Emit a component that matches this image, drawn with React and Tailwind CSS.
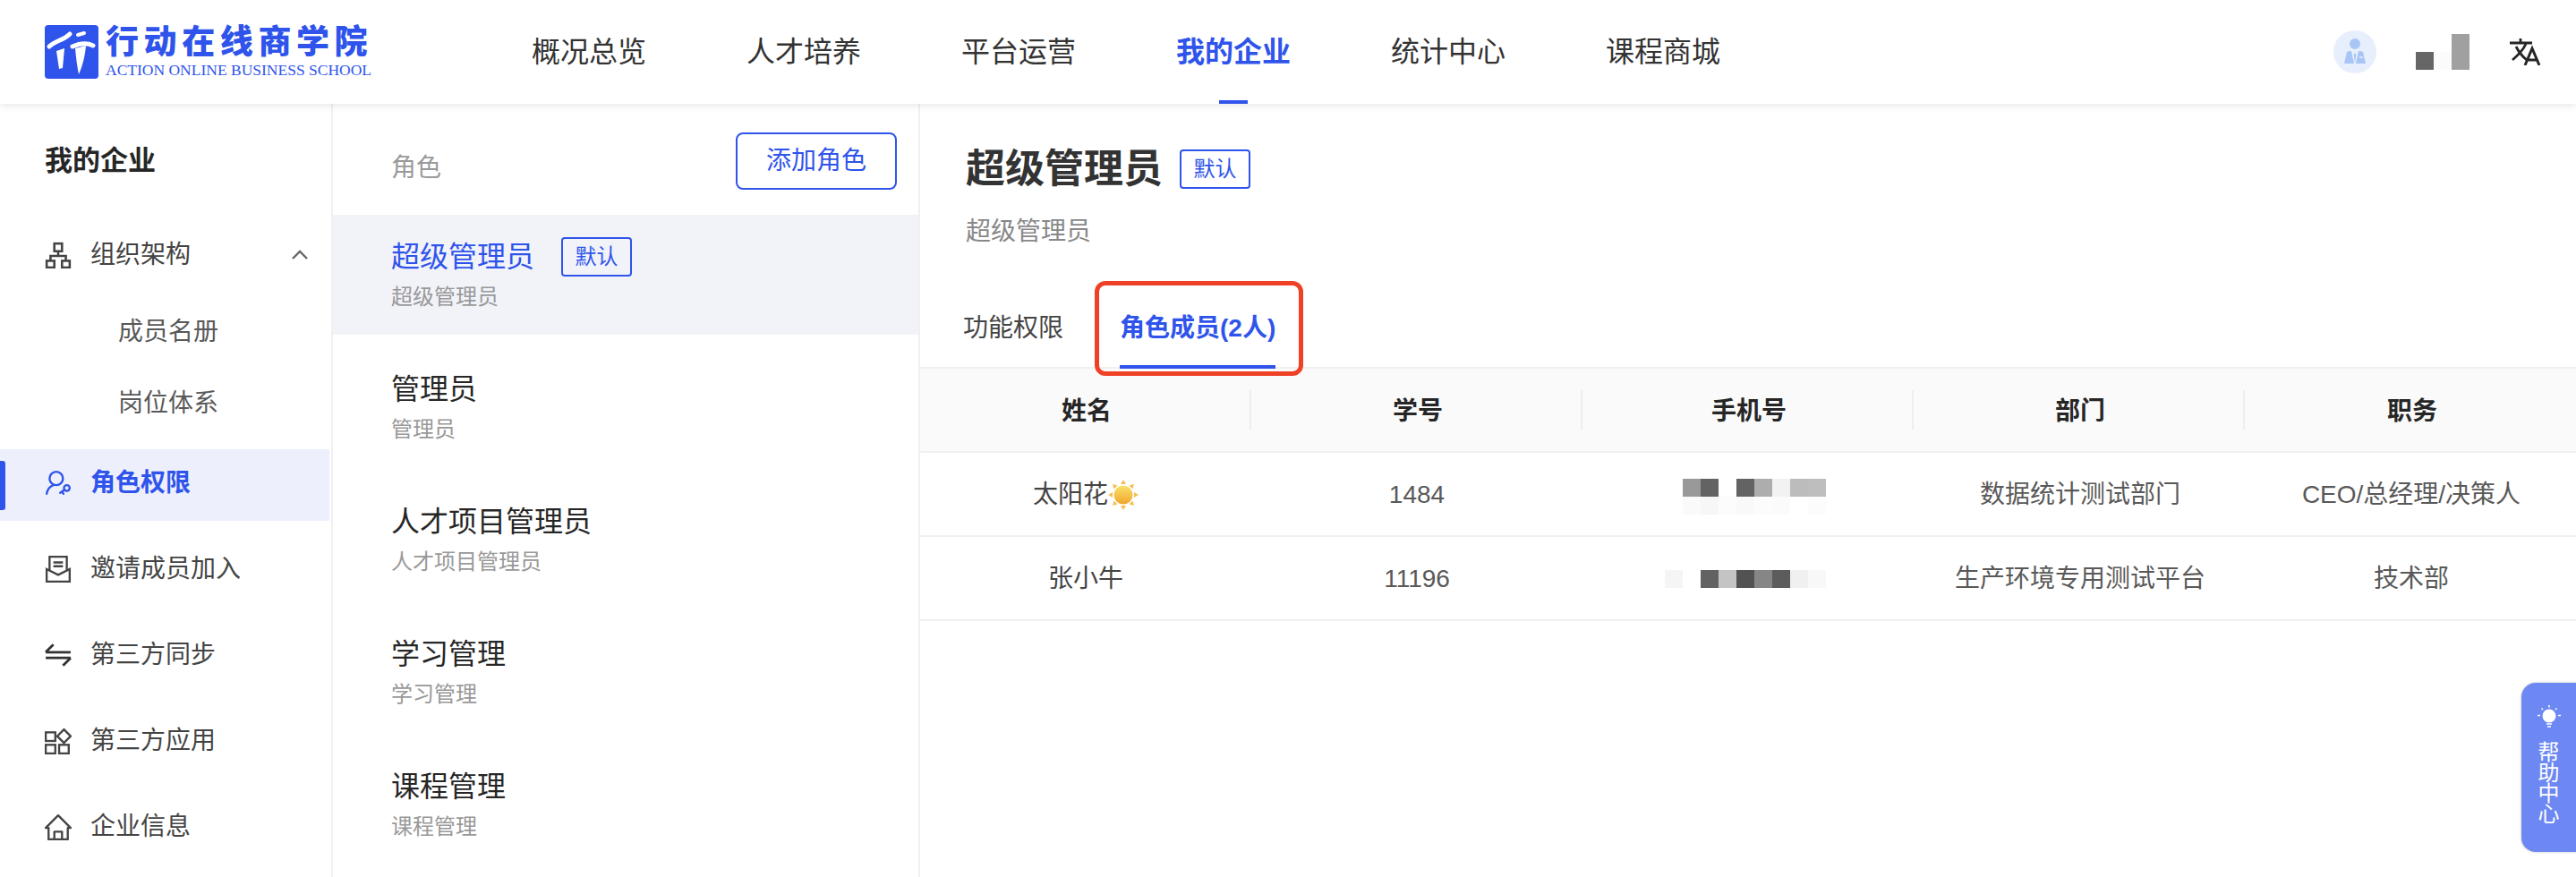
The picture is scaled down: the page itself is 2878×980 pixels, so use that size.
import React from "react";

const navItems = ["概况总览", "人才培养", "平台运营", "我的企业", "统计中心", "课程商城"];

const roles = [
  { name: "超级管理员", desc: "超级管理员", active: true },
  { name: "管理员", desc: "管理员" },
  { name: "人才项目管理员", desc: "人才项目管理员" },
  { name: "学习管理", desc: "学习管理" },
  { name: "课程管理", desc: "课程管理" },
];

const columns = ["姓名", "学号", "手机号", "部门", "职务"];

function LogoMark() {
  return (
    <svg width="60" height="60" viewBox="0 0 60 60" className="shrink-0">
      <rect width="60" height="60" rx="4" fill="#2f54eb" />
      <g fill="none" stroke="#fff" strokeLinecap="round">
        <path d="M5 24C12 17 20 18 28 10" strokeWidth="5" />
        <path d="M37 11L44 9" strokeWidth="4" />
        <path d="M31 24C38 21 46 19 54 23" strokeWidth="5" />
      </g>
      <path d="M13 29L22 26L20 48L16 49Z" fill="#fff" />
      <path d="M34 26L46 23C45 35 42 46 38 55C36 46 35 36 34 26Z" fill="#fff" />
    </svg>
  );
}

function OrgIcon() {
  return (
    <svg width="30" height="30" viewBox="0 0 28 28" fill="none" stroke="#444" strokeWidth="2.4">
      <rect x="10" y="2" width="8" height="8" />
      <rect x="2" y="20" width="8" height="7" />
      <rect x="18" y="20" width="8" height="7" />
      <path d="M14 10V15M6 20V15H22V20" />
    </svg>
  );
}

function RoleIcon() {
  return (
    <svg width="30" height="30" viewBox="0 0 28 28" fill="none" stroke="#2f54eb" strokeWidth="2.2" strokeLinecap="round">
      <circle cx="12" cy="9" r="7" />
      <path d="M2 25C3 20 6 17 9 16" />
      <circle cx="23" cy="19" r="3" />
      <path d="M20.5 21L16 24M18 22.5L19.5 25" />
    </svg>
  );
}

function InviteIcon() {
  return (
    <svg width="30" height="30" viewBox="0 0 28 28" fill="none" stroke="#444" strokeWidth="2.2">
      <path d="M5 15V1H23V15" />
      <path d="M9 7H19M9 11H19" />
      <path d="M2 14L14 20L26 14V27H2Z" />
    </svg>
  );
}

function SyncIcon() {
  return (
    <svg width="30" height="30" viewBox="0 0 28 28" fill="none" stroke="#333" strokeWidth="2.6">
      <path d="M1 11H27M1 11L9 3" />
      <path d="M27 17H1M27 17L19 25" />
    </svg>
  );
}

function AppsIcon() {
  return (
    <svg width="30" height="30" viewBox="0 0 28 28" fill="none" stroke="#444" strokeWidth="2.2">
      <rect x="1" y="5" width="10" height="9" />
      <rect x="1" y="18" width="10" height="9" />
      <rect x="15" y="18" width="10" height="9" />
      <path d="M20 2L27 9L20 16L13 9Z" />
    </svg>
  );
}

function HomeIcon() {
  return (
    <svg width="30" height="30" viewBox="0 0 28 28" fill="none" stroke="#444" strokeWidth="2.2" strokeLinejoin="round">
      <path d="M1 15L14 2L27 15H24V27H4V15Z" />
      <path d="M10 27V19H18V27" />
    </svg>
  );
}

function Avatar() {
  return (
    <svg width="48" height="48" viewBox="0 0 48 48">
      <circle cx="24" cy="24" r="24" fill="#e8effc" />
      <circle cx="24" cy="15" r="6" fill="#a9c5f6" />
      <path d="M12 37L15 24Q16 23 20 23L23 37Z" fill="#a9c5f6" />
      <path d="M36 37L33 24Q32 23 28 23L25 37Z" fill="#a9c5f6" />
      <path d="M24 25L22.8 27L23.4 33L24 36L24.6 33L25.2 27Z" fill="#a9c5f6" />
      <path d="M29 30H33" stroke="#fff" strokeWidth="1" />
    </svg>
  );
}

function TranslateIcon() {
  return (
    <svg width="34" height="30" viewBox="0 0 34 30" fill="none" stroke="#262626">
      <path d="M0 5H25M12 0V5" strokeWidth="2.8" />
      <path d="M18 6C15 13 10 18 3 24" strokeWidth="2.8" />
      <path d="M7 9C10 15 14 20 19 24" strokeWidth="2.8" />
      <path d="M17 30L25 11L33 30M20 24H30" strokeWidth="3" />
    </svg>
  );
}

function BulbIcon() {
  return (
    <svg width="26" height="28" viewBox="0 0 26 28" fill="none" stroke="#fff" strokeWidth="1.6">
      <circle cx="13" cy="13" r="7.5" fill="#fff" stroke="none" />
      <path d="M10 22H16M11 25H15" />
      <path d="M13 1V3.5M4.5 4.5L6 6M21.5 4.5L20 6M0 12.5H3M23 12.5H26" />
    </svg>
  );
}

function SunEmoji() {
  return (
    <svg width="34" height="34" viewBox="0 0 34 34">
      <defs>
        <linearGradient id="sunFill" x1="0" y1="0" x2="0" y2="1">
          <stop offset="0" stopColor="#fbe16a" />
          <stop offset="1" stopColor="#f0a52c" />
        </linearGradient>
      </defs>
      <path
        d="M17 0L20 5H14ZM17 34L14 29H20ZM0 17L5 14V20ZM34 17L29 20V14ZM5 5L10.5 6.5L6.5 10.5ZM29 5L27.5 10.5L23.5 6.5ZM5 29L6.5 23.5L10.5 27.5ZM29 29L23.5 27.5L27.5 23.5Z"
        fill="#f5bf55"
      />
      <circle cx="17" cy="17" r="10.5" fill="url(#sunFill)" />
    </svg>
  );
}

function Badge() {
  return (
    <span className="flex h-[44px] w-[79px] items-center justify-center rounded-[4px] border-2 border-[#2f54eb] text-[24px] text-[#2f54eb]">
      默认
    </span>
  );
}

function Pixels({ colors }) {
  return (
    <div className="flex">
      {colors.map((c, i) => (
        <div key={i} className={`h-[20px] w-[20px] ${c}`} />
      ))}
    </div>
  );
}

function SideItem({ icon, label, active }) {
  return (
    <div
      className={
        active
          ? "relative mr-[2px] mt-[11px] flex h-[80px] items-center gap-[21px] bg-[#edf0fc] pb-[4px] pl-[50px] text-[28px] font-semibold text-[#2f54eb]"
          : "mt-[16px] flex h-[80px] items-center gap-[21px] pb-[4px] pl-[50px] text-[28px] text-[#444]"
      }
    >
      {active && <span className="absolute left-0 top-[13px] h-[55px] w-[6px] rounded-r-[3px] bg-[#2f54eb]" />}
      {icon}
      <span>{label}</span>
    </div>
  );
}

export default function App() {
  return (
    <div className="relative flex h-[980px] w-[2878px] flex-col overflow-hidden bg-white text-[#333] [font-family:'Liberation_Sans','Noto_Sans_CJK_SC',sans-serif]">
      {/* Header */}
      <header className="relative z-10 flex h-[116px] shrink-0 items-center bg-white pl-[50px] shadow-[0_2px_8px_rgba(0,0,0,0.1)]">
        <div className="flex w-[366px] items-center gap-[8px]">
          <LogoMark />
          <div className="flex flex-col text-[#2f54eb]">
            <span className="text-[37px] font-black leading-[38px] tracking-[5.6px] whitespace-nowrap">行动在线商学院</span>
            <span className="mt-[2px] whitespace-nowrap text-[17.5px] leading-[18px] [font-family:'Liberation_Serif',serif]">
              ACTION ONLINE BUSINESS SCHOOL
            </span>
          </div>
        </div>
        <nav className="ml-[178px] flex h-full items-center gap-[112px]">
          {navItems.map((item) => (
            <div
              key={item}
              className={
                item === "我的企业"
                  ? "relative flex h-full items-center text-[32px] font-semibold text-[#2f54eb]"
                  : "flex h-full items-center text-[32px] text-[#333]"
              }
            >
              {item}
              {item === "我的企业" && <span className="absolute bottom-0 left-[48px] h-[4px] w-[32px] bg-[#2f54eb]" />}
            </div>
          ))}
        </nav>
        <div className="ml-auto flex items-center pr-[40px]">
          <Avatar />
          <div className="ml-[44px] flex h-[40px] items-end">
            <div className="h-[20px] w-[20px] bg-[#666]" />
            <div className="h-[20px] w-[20px] bg-[#fbfbfb]" />
            <div className="h-[40px] w-[20px] bg-[#a0a0a0]" />
          </div>
          <div className="ml-[45px] flex">
            <TranslateIcon />
          </div>
        </div>
      </header>

      <div className="flex min-h-0 flex-1">
        {/* Sidebar */}
        <aside className="w-[372px] shrink-0 border-r-2 border-[#f0f0f0]">
          <div className="pl-[50px] pt-[42px] text-[31px] font-bold leading-[44px] text-[#262626]">我的企业</div>
          <div className="mt-[43px] flex h-[80px] items-center gap-[21px] pl-[50px] pr-[26px] text-[28px] text-[#444]">
            <OrgIcon />
            <span>组织架构</span>
            <svg width="18" height="12" viewBox="0 0 18 12" fill="none" stroke="#666" strokeWidth="2.4" className="ml-auto">
              <path d="M1 10L9 2L17 10" />
            </svg>
          </div>
          <div className="ml-[132px] mt-[6px] flex h-[80px] items-center text-[28px] text-[#595959]">成员名册</div>
          <div className="ml-[132px] flex h-[80px] items-center text-[28px] text-[#595959]">岗位体系</div>
          <SideItem icon={<RoleIcon />} label="角色权限" active />
          <SideItem icon={<InviteIcon />} label="邀请成员加入" />
          <SideItem icon={<SyncIcon />} label="第三方同步" />
          <SideItem icon={<AppsIcon />} label="第三方应用" />
          <SideItem icon={<HomeIcon />} label="企业信息" />
        </aside>

        {/* Role list */}
        <section className="w-[656px] shrink-0 border-r-2 border-[#f0f0f0]">
          <div className="flex h-[124px] items-start justify-between pl-[65px] pr-[24px] pt-[32px]">
            <span className="mt-[20px] text-[28px] leading-[40px] text-[#999]">角色</span>
            <button className="h-[64px] w-[180px] rounded-[8px] border-2 border-[#2f54eb] text-[28px] text-[#2f54eb]">添加角色</button>
          </div>
          <div className="flex flex-col gap-[14px]">
            {roles.map((role) => (
              <div key={role.name} className={role.active ? "h-[134px] bg-[#f2f3f9] pl-[65px] pt-[23px]" : "h-[134px] pl-[65px] pt-[23px]"}>
                <div className="flex h-[48px] items-center gap-[30px]">
                  <span className={role.active ? "text-[32px] text-[#2f54eb]" : "text-[32px] text-[#262626]"}>{role.name}</span>
                  {role.active && <Badge />}
                </div>
                <div className="mt-[3px] text-[24px] leading-[36px] text-[#999]">{role.desc}</div>
              </div>
            ))}
          </div>
        </section>

        {/* Role detail */}
        <main className="min-w-0 flex-1">
          <div className="pl-[51px] pt-[43px]">
            <div className="flex h-[60px] items-center gap-[19px]">
              <h1 className="text-[44px] font-bold text-[#333]">超级管理员</h1>
              <Badge />
            </div>
            <p className="mt-[20px] text-[28px] leading-[40px] text-[#888]">超级管理员</p>
            <div className="-ml-[3px] mt-[40px] flex h-[91px] gap-[63px]">
              <div className="flex items-center pt-[4px] text-[28px] text-[#444]">功能权限</div>
              <div className="relative flex items-center pt-[4px] text-[28px] font-semibold text-[#2f54eb]">
                角色成员(2人)
                <span className="absolute bottom-[-2px] left-0 right-0 h-[4px] bg-[#2f54eb]" />
                <span className="absolute left-[-28px] top-[-5px] h-[106px] w-[233px] rounded-[12px] border-[5px] border-[#ee4125]" />
              </div>
            </div>
          </div>

          {/* Members table */}
          <div className="grid h-[96px] grid-cols-5 items-center border-y-2 border-[#f0f0f0] bg-[#fafafa] text-[28px] font-semibold text-[#262626]">
            {columns.map((col, i) => (
              <div key={col} className={i < 4 ? "flex h-[44px] items-center justify-center border-r-2 border-[#eee] pl-[4px] pt-[4px]" : "flex h-[44px] items-center justify-center pl-[4px] pt-[4px]"}>
                {col}
              </div>
            ))}
          </div>
          <div className="grid h-[94px] grid-cols-5 items-center border-b-2 border-[#f0f0f0] pt-[2px] text-center text-[28px] text-[#595959]">
            <div className="flex items-center justify-center text-[#444]">
              太阳花
              <SunEmoji />
            </div>
            <div>1484</div>
            <div className="mt-[3px] pl-[112px]">
              <Pixels colors={["bg-[#999]", "bg-[#636363]", "bg-white", "bg-[#636363]", "bg-[#adadad]", "bg-[#f2f2f2]", "bg-[#bcbcbc]", "bg-[#bebebe]"]} />
              <Pixels colors={["bg-[#fafafa]", "bg-[#f7f7f7]", "bg-[#fcfcfc]", "bg-[#f9f9f9]", "bg-[#fcfcfc]", "bg-[#fbfbfb]", "bg-white", "bg-[#fcfcfc]"]} />
            </div>
            <div className="pl-[2px]">数据统计测试部门</div>
            <div className="pl-[2px]">CEO/总经理/决策人</div>
          </div>
          <div className="grid h-[94px] grid-cols-5 items-center border-b-2 border-[#f0f0f0] pt-[2px] text-center text-[28px] text-[#595959]">
            <div className="text-[#444]">张小牛</div>
            <div>11196</div>
            <div className="-mt-[1px] pl-[92px]">
              <Pixels colors={["bg-[#f5f5f5]", "bg-white", "bg-[#626262]", "bg-[#c4c4c4]", "bg-[#525252]", "bg-[#868686]", "bg-[#5c5c5c]", "bg-[#f0f0f0]", "bg-[#f8f8f8]"]} />
            </div>
            <div className="pl-[2px]">生产环境专用测试平台</div>
            <div className="pl-[2px]">技术部</div>
          </div>
        </main>
      </div>

      {/* Help tab */}
      <div className="absolute right-0 top-[763px] z-20 flex h-[189px] w-[61px] flex-col items-center rounded-l-[16px] bg-[#6d88f2] pt-[24px] text-white shadow-[0_0_3px_rgba(0,0,0,0.25)]">
        <BulbIcon />
        <div className="mt-[14px] flex flex-col text-[24px] leading-[23px]">
          <span>帮</span>
          <span>助</span>
          <span>中</span>
          <span>心</span>
        </div>
      </div>
    </div>
  );
}
